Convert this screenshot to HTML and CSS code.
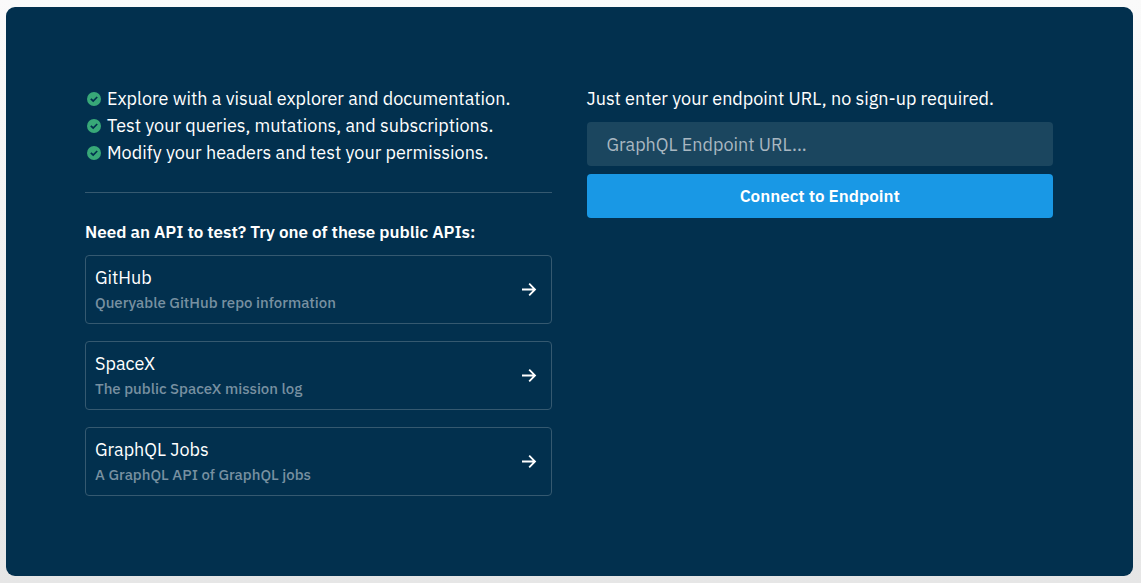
FILE: index.html
```
<!DOCTYPE html>
<html lang="en">
<head>
<meta charset="utf-8">
<meta name="viewport" content="width=device-width, initial-scale=1">
<title>Connect to a GraphQL endpoint</title>
<link rel="stylesheet" href="styles.css">
</head>
<body>
<svg class="sprite" aria-hidden="true">
  <symbol id="check" viewBox="0 0 14 14"><circle cx="7" cy="7" r="7" fill="#38a878"/><path d="M3.8 6.8 6.2 9 10.2 5" fill="none" stroke="#02304e" stroke-width="1.7"/></symbol>
  <symbol id="arrow" viewBox="0 0 16 14"><path d="M1 6.5H14M8.2 .7 14 6.5 8.2 12.3" fill="none" stroke="#fff" stroke-width="1.8"/></symbol>
</svg>
<main class="panel">
  <section class="column">
    <ul class="features">
      <li class="feature"><svg class="check"><use href="#check"/></svg>Explore with a visual explorer and documentation.</li>
      <li class="feature"><svg class="check"><use href="#check"/></svg>Test your queries, mutations, and subscriptions.</li>
      <li class="feature"><svg class="check"><use href="#check"/></svg>Modify your headers and test your permissions.</li>
    </ul>
    <hr class="divider">
    <h2 class="heading">Need an API to test? Try one of these public APIs:</h2>
    <nav class="apis">
      <a class="api" href="#github"><span class="api-text"><span class="api-name">GitHub</span><span class="api-info">Queryable GitHub repo information</span></span><svg class="arrow"><use href="#arrow"/></svg></a>
      <a class="api" href="#spacex"><span class="api-text"><span class="api-name">SpaceX</span><span class="api-info">The public SpaceX mission log</span></span><svg class="arrow"><use href="#arrow"/></svg></a>
      <a class="api" href="#jobs"><span class="api-text"><span class="api-name">GraphQL Jobs</span><span class="api-info">A GraphQL API of GraphQL jobs</span></span><svg class="arrow"><use href="#arrow"/></svg></a>
    </nav>
  </section>
  <form class="column">
    <label class="label" for="endpoint">Just enter your endpoint URL, no sign-up required.</label>
    <input class="endpoint" id="endpoint" type="text" placeholder="GraphQL Endpoint URL...">
    <button class="connect" type="button">Connect to Endpoint</button>
  </form>
</main>
</body>
</html>
```
FILE: styles.css
```
* { box-sizing: border-box; }
body {
  margin: 0;
  padding: 7px 8px 7px 6px;
  background: linear-gradient(#fafafa, #e6e6e6);
  color: #fff;
  font: 18px/27px "IBM Plex Sans", "Noto Sans", sans-serif;
}
.sprite { display: none; }
.panel {
  display: grid;
  grid-template-columns: 1fr 1fr;
  align-items: start;
  gap: 35px;
  min-height: calc(100vh - 14px);
  padding: 78px 80px 78px 79px;
  border-radius: 9px;
  background: #02304e;
}
.column { display: flex; flex-direction: column; min-width: 0; }
.features { margin: 0; padding: 0; list-style: none; }
.feature { display: flex; align-items: center; gap: 6px; padding-left: 2px; }
.check { flex: none; width: 14px; height: 14px; }
.divider {
  width: 100%;
  margin: 26px 0;
  border: 0;
  border-top: 1px solid #355970;
}
.heading { margin: 0 0 9px; font-size: 17px; font-weight: 600; }
.apis { display: flex; flex-direction: column; gap: 17px; }
.api {
  display: flex;
  align-items: center;
  justify-content: space-between;
  padding: 8px 14px 8px 9px;
  border: 1px solid #355970;
  border-radius: 4px;
  color: #fff;
  text-decoration: none;
}
.api-text { display: flex; flex-direction: column; }
.api-info { color: #7890a1; font-size: 15px; font-weight: 500; line-height: 24px; }
.arrow { flex: none; width: 16px; height: 14px; }
.label { margin-bottom: 10px; }
.endpoint, .connect {
  width: 100%;
  height: 44px;
  border: 0;
  border-radius: 4px;
  color: #fff;
  font: inherit;
}
.endpoint { margin-bottom: 8px; padding: 0 20px; background: #1b465f; }
.endpoint::placeholder { color: #a9b7c1; opacity: 1; }
.connect { background: #1998e5; font-size: 17px; font-weight: 600; cursor: pointer; }
```
